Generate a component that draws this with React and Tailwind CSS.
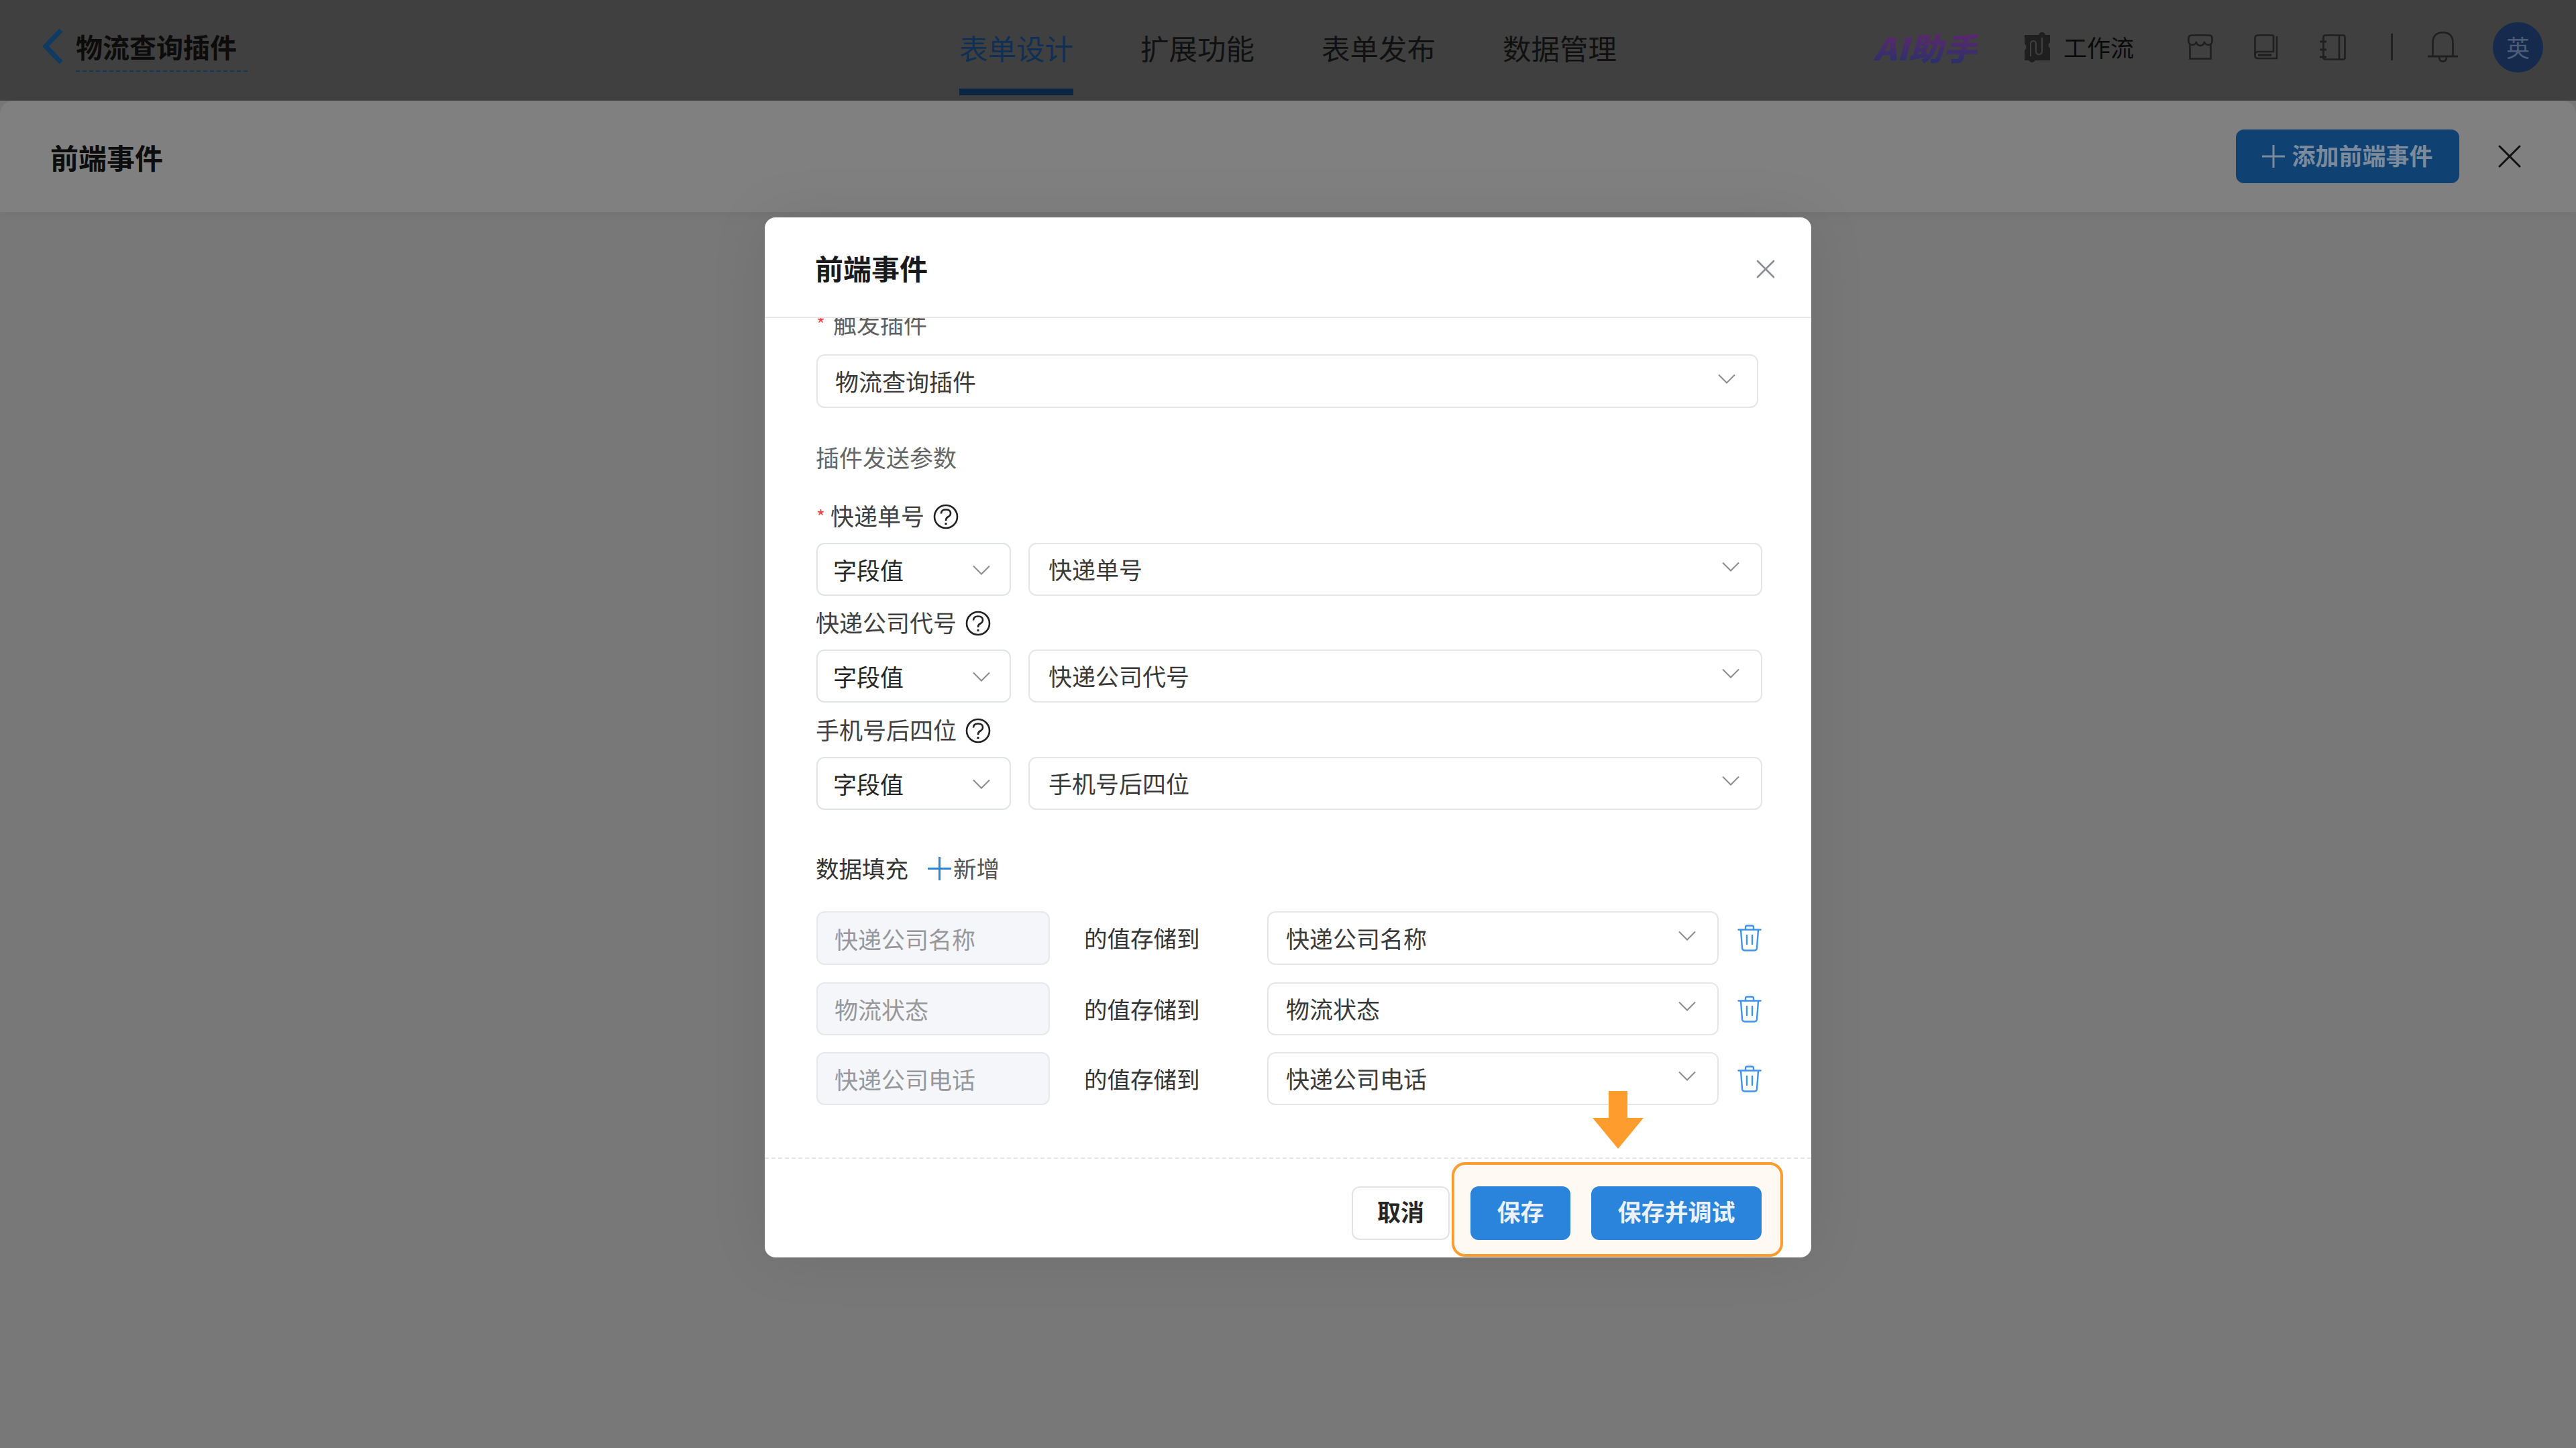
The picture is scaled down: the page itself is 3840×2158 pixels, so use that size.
import { X } from 'lucide-react'

function Chevron({ className }) {
  return (
    <svg width="26" height="15" viewBox="0 0 26 15" fill="none" stroke="#8c8c8c" strokeWidth="2" className={`shrink-0 ${className}`}>
      <path d="M1 1.5 L13 13.5 L25 1.5" />
    </svg>
  )
}

function Select({ label, className }) {
  return (
    <div className={`flex items-center justify-between rounded-[12px] border-2 border-[#e6e6e8] bg-white text-[35px] text-[#3a3a3a] ${className}`}>
      <span>{label}</span>
      <Chevron className="mb-[8px]" />
    </div>
  )
}

function HelpIcon() {
  return (
    <svg width="38" height="38" viewBox="0 0 38 38" fill="none" stroke="#222222" strokeWidth="2.6" className="ml-[13px] mt-[2px] shrink-0">
      <circle cx="19" cy="19" r="17" />
      <path d="M12 14.5 Q12 8.5 19 8.5 Q26 8.5 26 14 Q26 17.5 22 19.5 Q19 21 19 25" />
      <path d="M19 28 V31" strokeWidth="3" />
    </svg>
  )
}

function Label({ text, required, help }) {
  return (
    <div className="-ml-[1px] flex h-[50px] items-center text-[35px] text-[#404040]">
      {required && <span className="w-[22px] pl-[1px] text-[28px] leading-[30px] text-[#f0474a]">*</span>}
      <span className="mb-[2px]">{text}</span>
      {help && <HelpIcon />}
    </div>
  )
}

function ParamRow({ label, className }) {
  return (
    <div className={`flex h-[79px] gap-[26px] ${className}`}>
      <div className="flex w-[290px] items-center justify-between rounded-[12px] border-2 border-[#e0e3ea] bg-white pl-[23px] pr-[29px] text-[35px] text-[#262626]">
        <span className="mt-[2px]">字段值</span>
        <Chevron className="mt-[2px]" />
      </div>
      <Select label={label} className="w-[1094px] pl-[28px] pr-[32px]" />
    </div>
  )
}

function TrashIcon() {
  return (
    <svg width="36" height="40" viewBox="0 0 36 40" fill="none" stroke="#3d94ee" strokeWidth="2.4" strokeLinecap="round" strokeLinejoin="round">
      <path d="M1.5 7.5 H34.5" />
      <path d="M12 7 V4 Q12 1.5 14.5 1.5 H21.5 Q24 1.5 24 4 V7" />
      <path d="M5 8 L7 35 Q7.3 38.5 11 38.5 H25 Q28.7 38.5 29 35 L31 8" />
      <path d="M14 16 V29" />
      <path d="M22 16 V29" />
    </svg>
  )
}

function FillRow({ name, className }) {
  return (
    <div className={`flex items-stretch ${className}`}>
      <div className="flex w-[348px] items-center rounded-[12px] border-2 border-[#e6e8ee] bg-[#f4f6fa] pl-[25px] text-[35px] text-[#98989c]">
        <span className="mt-[2px]">{name}</span>
      </div>
      <div className="ml-[51px] flex w-[273px] items-center text-[34.5px] text-[#333333]">的值存储到</div>
      <Select label={name} className="w-[673px] pl-[26px] pr-[32px]" />
      <div className="ml-[28px] flex items-center">
        <TrashIcon />
      </div>
    </div>
  )
}

function StoreIcon() {
  return (
    <svg width="38" height="38" viewBox="0 0 38 38" fill="none" stroke="#1f1f1f" strokeWidth="2.6" className="shrink-0">
      <path d="M6 1.5 H32 Q36.5 1.5 36.5 6 V11 A5.8 5.8 0 0 1 25 11 A5.8 5.8 0 0 1 13 11 A5.8 5.8 0 0 1 1.5 11 V6 Q1.5 1.5 6 1.5 Z" />
      <path d="M3.5 15 V36.5 H34.5 V15" />
    </svg>
  )
}

function BookIcon() {
  return (
    <svg width="36" height="38" viewBox="0 0 36 38" fill="none" stroke="#1f1f1f" strokeWidth="2.6" className="shrink-0">
      <path d="M29 1.5 H6 Q1.5 1.5 1.5 6 V32 Q1.5 36 6 36 H34" />
      <path d="M29 1.5 V26 H6 Q1.5 26 1.5 31" />
      <path d="M34 3 V37" />
      <path d="M6 31 H26" strokeWidth="3.4" />
    </svg>
  )
}

function NotebookIcon() {
  return (
    <svg width="39" height="39" viewBox="0 0 39 39" fill="none" stroke="#1f1f1f" strokeWidth="2.6" className="shrink-0">
      <rect x="5.5" y="1.5" width="32" height="36" rx="2.5" />
      <path d="M29 1.5 V37.5" />
      <path d="M0 11 H10 M0 23 H10 M0 34 H10" strokeWidth="3.2" />
    </svg>
  )
}

function BellIcon() {
  return (
    <svg width="45" height="46" viewBox="0 0 45 46" fill="none" stroke="#1f1f1f" strokeWidth="2.6" className="shrink-0">
      <path d="M7.5 37 V17 Q7.5 1.5 22.5 1.5 Q37.5 1.5 37.5 17 V37" />
      <path d="M0 37 H45" strokeWidth="3" />
      <path d="M17 38 Q17 44.5 22.5 44.5 Q28 44.5 28 38" />
    </svg>
  )
}

function WorkflowIcon() {
  return (
    <svg width="38" height="45" viewBox="0 0 38 45" className="shrink-0">
      <path d="M0 4 H38 V15 Q33 19 38 24 V42 H0 V27 Q5 22 0 17 Z" fill="#1f1f1f" />
      <circle cx="26" cy="5" r="5" fill="#1f1f1f" />
      <circle cx="11" cy="40" r="5" fill="#1f1f1f" />
      <path d="M26 8 V28 Q26 33 21 33 Q17 33 17 28 V18 Q17 13 13 13 Q9 13 9 18 V36" fill="none" stroke="#404040" strokeWidth="2" />
    </svg>
  )
}

export default function App() {
  return (
    <div className="relative h-[2158px] w-[3840px] overflow-hidden bg-[#787878] font-['Noto_Sans_CJK_SC','Noto_Sans',sans-serif]">
      {/* Top nav */}
      <header className="flex h-[150px] items-start bg-[#404040]">
        <div className="flex w-[1430px] items-start pl-[64px] pt-[43px]">
          <svg width="30" height="52" viewBox="0 0 30 52" fill="none" stroke="#0f3a63" strokeWidth="7">
            <path d="M27 2 L4 26 L27 50" />
          </svg>
          <div className="ml-[19px] flex h-[64px] w-[256px] items-start border-b-2 border-dashed border-[#12365a] text-[40px] font-bold leading-[52px] text-[#0c0c0c]">
            物流查询插件
          </div>
        </div>

        <nav className="flex gap-[100px] text-[42.5px] leading-[56px] text-[#111111]">
          <div className="flex h-[142px] w-[170px] flex-col justify-between pt-[43px] text-[#0f3054]">
            <span>表单设计</span>
            <span className="h-[10px] bg-[#0c2542]" />
          </div>
          <div className="w-[170px] pt-[43px]">扩展功能</div>
          <div className="w-[170px] pt-[43px]">表单发布</div>
          <div className="w-[170px] pt-[43px]">数据管理</div>
        </nav>

        <div className="ml-[383px] flex items-center pt-[32px]">
          <div className="flex h-[76px] w-[225px] items-center">
            <span className="origin-left scale-x-[1.12] bg-gradient-to-b from-[#6a1f6e] to-[#16306a] bg-clip-text text-[46px] font-black italic text-transparent">
              AI助手
            </span>
          </div>
          <WorkflowIcon />
          <span className="ml-[20px] w-[105px] whitespace-nowrap text-[35px] text-[#0a0a0a]">工作流</span>
          <div className="ml-[80px] flex items-center">
            <StoreIcon />
            <div className="ml-[61px]"><BookIcon /></div>
            <div className="ml-[62px]"><NotebookIcon /></div>
            <div className="ml-[67px] h-[40px] w-[3px] bg-[#222222]" />
            <div className="ml-[52px]"><BellIcon /></div>
            <div className="ml-[52px] flex size-[75px] shrink-0 items-center justify-center rounded-full bg-[#152a4c] text-[35px] text-[#4d5d78]">英</div>
          </div>
        </div>
      </header>

      {/* Event panel header */}
      <div className="flex h-[166px] items-center rounded-t-[20px] bg-[#808080] pl-[75px] shadow-[0_4px_14px_rgba(0,0,0,0.05)]">
        <div className="text-[42px] font-bold text-[#0d0d0d]">前端事件</div>
        <button className="ml-auto flex h-[80px] w-[333px] items-center justify-center gap-[10px] rounded-[12px] bg-[#0f4272] text-[35px] font-bold text-[#7b8b9c]">
          <svg width="34" height="34" viewBox="0 0 34 34" stroke="#7b8b9c" strokeWidth="3">
            <path d="M0 17 H34 M17 0 V34" />
          </svg>
          <span className="mb-[3px]">添加前端事件</span>
        </button>
        <X size={60} strokeWidth={1.2} color="#111111" className="ml-[45px] mr-[69px]" />
      </div>

      {/* Dialog overlay */}
      <div className="absolute inset-0 flex justify-center pt-[324px]">
        <div className="relative flex h-[1550px] w-[1560px] flex-col overflow-hidden rounded-[16px] bg-white shadow-[0_0_90px_rgba(0,0,0,0.08)]">
          <div className="flex h-[150px] shrink-0 items-center justify-between border-b-2 border-[#e6e6e6] pl-[75px] pr-[44px]">
            <div className="text-[42px] font-bold text-[#1a1a1a]">前端事件</div>
            <X size={48} strokeWidth={1.3} color="#8a8f99" className="mt-[6px]" />
          </div>

          <div className="flex h-[1251px] flex-col overflow-hidden pl-[77px] pr-[73px]">
            <div className="mt-[-17px] flex h-[50px] items-center text-[35px] text-[#606060]">
              <span className="w-[25px] text-[28px] leading-[30px] text-[#f0474a]">*</span>
              <span>触发插件</span>
            </div>
            <Select label="物流查询插件" className="mt-[21px] h-[80px] w-[1404px] pl-[26px] pr-[32px]" />
            <div className="-ml-[1px] mt-[48px] flex h-[50px] items-center text-[35px] text-[#666666]">插件发送参数</div>

            <div className="mt-[38px]"><Label text="快递单号" required help /></div>
            <ParamRow label="快递单号" className="mt-[15px]" />
            <div className="mt-[15px]"><Label text="快递公司代号" help /></div>
            <ParamRow label="快递公司代号" className="mt-[15px]" />
            <div className="mt-[16px]"><Label text="手机号后四位" help /></div>
            <ParamRow label="手机号后四位" className="mt-[15px]" />

            <div className="-ml-[1px] mt-[62px] flex h-[50px] items-center text-[34.5px] text-[#333333]">
              <span>数据填充</span>
              <svg width="35" height="35" viewBox="0 0 35 35" stroke="#2b84dc" strokeWidth="3" className="ml-[29px]">
                <path d="M0 17.5 H35 M17.5 0 V35" />
              </svg>
              <span className="ml-[3px] text-[#555555]">新增</span>
            </div>

            <FillRow name="快递公司名称" className="mt-[39px] h-[80px]" />
            <FillRow name="物流状态" className="mt-[26px] h-[79px]" />
            <FillRow name="快递公司电话" className="mt-[25px] h-[79px]" />
          </div>

          <div className="flex h-[149px] items-start justify-end border-t-2 border-dashed border-[#e6e6e6] pt-[5px]">
            <button className="mt-[36px] h-[80px] w-[146px] rounded-[12px] border-2 border-[#e0e3ea] bg-white pb-[6px] text-[35px] font-bold text-[#262626]">取消</button>
            <div className="ml-[3px] mr-[42px] flex h-[141px] w-[494px] items-start gap-[31px] rounded-[20px] border-4 border-[#ff9c2e] bg-[#fef9f3] pl-[24px] pt-[32px]">
              <button className="h-[80px] w-[149px] rounded-[12px] bg-[#2b84dc] pb-[6px] text-[35px] font-bold text-[#eaf1fa]">保存</button>
              <button className="h-[80px] w-[254px] rounded-[12px] bg-[#2b84dc] pb-[6px] text-[35px] font-bold text-[#eaf1fa]">保存并调试</button>
            </div>
          </div>

          {/* Annotation arrow */}
          <svg width="76" height="86" viewBox="0 0 76 86" className="absolute left-[1234px] top-[1302px]">
            <path d="M24 0 H52 V40 H76 L38 86 L0 40 H24 Z" fill="#ff9c2e" />
          </svg>
        </div>
      </div>
    </div>
  )
}
